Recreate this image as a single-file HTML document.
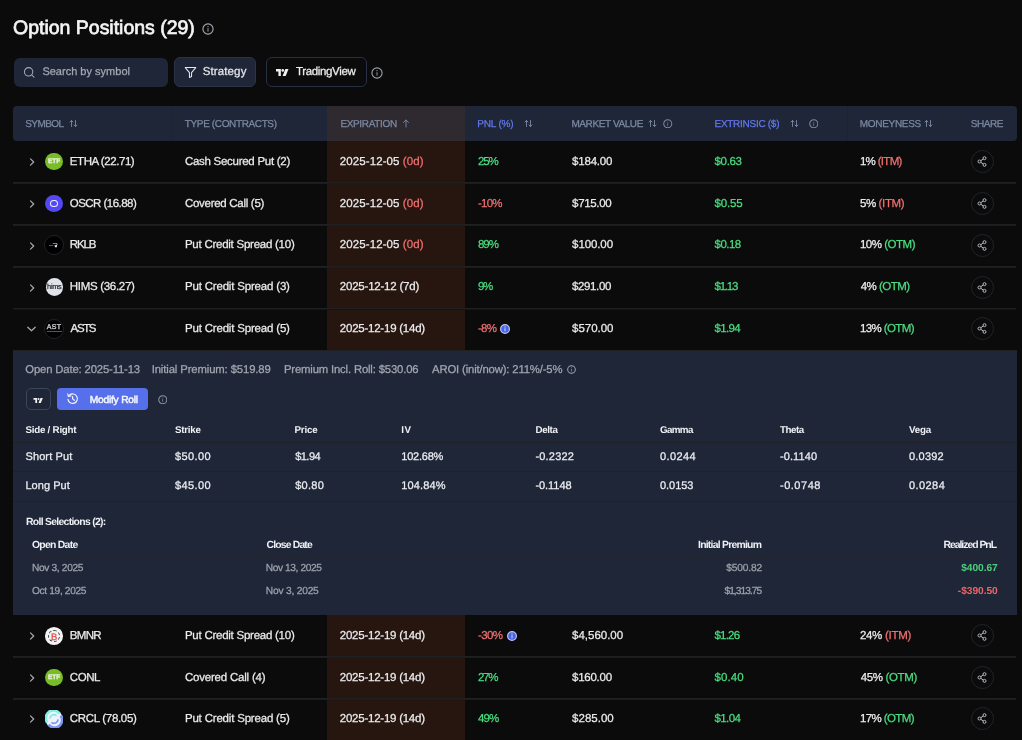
<!DOCTYPE html>
<html><head><meta charset="utf-8"><title>Option Positions</title><style>
*{box-sizing:border-box;margin:0;padding:0}
html,body{width:1022px;height:740px;overflow:hidden;background:#0b0b0c;font-family:"Liberation Sans",sans-serif;color:#ececee;text-rendering:geometricPrecision}
.a{position:absolute;white-space:nowrap}
.t{position:absolute;white-space:nowrap;line-height:1;-webkit-text-stroke:0.25px currentColor}
.b{-webkit-text-stroke:0}
#root{position:absolute;left:0;top:0;width:1022px;height:740px;will-change:transform}
.r{color:#f07070} .g{color:#4ade80}
</style></head>
<body><div id="root">
<div id="t0" class="t" style="top:19.29px;font-size:19.5px;left:13.10px;letter-spacing:-0.020px;color:#f4f4f5;-webkit-text-stroke:0.7px #f4f4f5;">Option Positions (29)</div>
<svg class="a" style="left:201.5px;top:23.0px" width="12" height="12" viewBox="0 0 24 24"><circle cx="12" cy="12" r="10.2" fill="none" stroke="#a9acb3" stroke-width="2.20"/><rect x="11.1" y="10.4" width="1.8" height="6.8" fill="#a9acb3"/><circle cx="12" cy="7.4" r="1.2" fill="#a9acb3"/></svg>
<div class="a" style="left:13.5px;top:57.5px;width:154.5px;height:29px;border-radius:6px;background:#1e2638"></div>
<svg class="a" style="left:22.5px;top:66px" width="12" height="12" viewBox="0 0 24 24" fill="none" stroke="#a3a8b3" stroke-width="2.1" stroke-linecap="round"><circle cx="11.2" cy="11.6" r="8.4"/><path d="M17.6 18l4.4 4.4"/></svg>
<div id="t1" class="t" style="top:67.19px;font-size:11px;left:42.38px;letter-spacing:0.011px;color:#a3a8b3;">Search by symbol</div>
<div class="a" style="left:174.3px;top:57.4px;width:82px;height:29.7px;border-radius:6px;background:#1e2638;border:1px solid #2b3447"></div>
<svg class="a" style="left:184px;top:65.6px" width="13" height="12.6" viewBox="0 0 24 24" fill="none" stroke="#e5e7eb" stroke-width="2" stroke-linejoin="round"><path d="M2 3h20l-8 9.5V20l-4 2v-9.5z"/></svg>
<div id="t2" class="t" style="top:67.06px;font-size:11.5px;left:202.76px;letter-spacing:0.114px;color:#e5e7eb;">Strategy</div>
<div class="a" style="left:266.2px;top:57.4px;width:100.8px;height:29.7px;border-radius:6px;border:1px solid #283044"></div>
<svg class="a" style="left:276px;top:68.8px" width="12.5" height="7" viewBox="0 0 36 20"><path d="M0 0h14v20H7V7H0z" fill="#f0f0f0"/><circle cx="19.5" cy="4" r="3.8" fill="#f0f0f0"/><path d="M27 0h9l-8 20h-9z" fill="#f0f0f0"/></svg>
<div id="t3" class="t" style="top:67.06px;font-size:11.5px;left:296.00px;letter-spacing:-0.352px;color:#eeeeee;">TradingView</div>
<svg class="a" style="left:370.7px;top:66.5px" width="12" height="12" viewBox="0 0 24 24"><circle cx="12" cy="12" r="10.2" fill="none" stroke="#9ca0a8" stroke-width="2.20"/><rect x="11.1" y="10.4" width="1.8" height="6.8" fill="#9ca0a8"/><circle cx="12" cy="7.4" r="1.2" fill="#9ca0a8"/></svg>
<div class="a" style="left:13px;top:106px;width:1004px;height:35px;border-radius:4px;background:#1e2638;overflow:hidden"><div class="a" style="left:314px;top:0;width:138px;height:35px;background:#2f2930"></div><div class="a" style="left:158px;top:0;width:1px;height:35px;background:#1c2334"></div><div class="a" style="left:834px;top:0;width:1px;height:35px;background:#1c2334"></div></div>
<div class="a" style="left:327px;top:141px;width:138px;height:599px;background:#26160f"></div>
<div id="t4" class="t" style="top:120.13px;font-size:10px;left:25.20px;letter-spacing:-0.544px;color:#7d8aa3;">SYMBOL</div>
<svg class="a" style="left:68.5px;top:119.1px" width="9" height="9" viewBox="0 0 18 18" fill="none" stroke="#7d8aa3" stroke-width="1.8" stroke-linecap="round" stroke-linejoin="round"><path d="M5 15V3M2 6l3-3 3 3M13 3v12M10 12l3 3 3-3"/></svg>
<div id="t5" class="t" style="top:120.13px;font-size:10px;left:184.82px;letter-spacing:-0.373px;color:#7d8aa3;">TYPE (CONTRACTS)</div>
<div id="t6" class="t" style="top:120.13px;font-size:10px;left:340.38px;letter-spacing:-0.338px;color:#7d8aa3;">EXPIRATION</div>
<svg class="a" style="left:401.5px;top:119.1px" width="8" height="9" viewBox="0 0 16 18" fill="none" stroke="#7d8aa3" stroke-width="1.8" stroke-linecap="round" stroke-linejoin="round"><path d="M8 16V2M3 7l5-5 5 5"/></svg>
<div id="t7" class="t" style="top:120.13px;font-size:10px;left:477.32px;letter-spacing:-0.187px;color:#6377ee;">PNL (%)</div>
<svg class="a" style="left:523.8px;top:119.1px" width="9" height="9" viewBox="0 0 18 18" fill="none" stroke="#7d8aa3" stroke-width="1.8" stroke-linecap="round" stroke-linejoin="round"><path d="M5 15V3M2 6l3-3 3 3M13 3v12M10 12l3 3 3-3"/></svg>
<div id="t8" class="t" style="top:120.13px;font-size:10px;left:571.38px;letter-spacing:-0.393px;color:#7d8aa3;">MARKET VALUE</div>
<svg class="a" style="left:647.8px;top:119.1px" width="9" height="9" viewBox="0 0 18 18" fill="none" stroke="#7d8aa3" stroke-width="1.8" stroke-linecap="round" stroke-linejoin="round"><path d="M5 15V3M2 6l3-3 3 3M13 3v12M10 12l3 3 3-3"/></svg>
<svg class="a" style="left:663.25px;top:118.85px" width="9.5" height="9.5" viewBox="0 0 24 24"><circle cx="12" cy="12" r="10.2" fill="none" stroke="#7d8aa3" stroke-width="2.53"/><rect x="11.1" y="10.4" width="1.8" height="6.8" fill="#7d8aa3"/><circle cx="12" cy="7.4" r="1.2" fill="#7d8aa3"/></svg>
<div id="t9" class="t" style="top:120.13px;font-size:10px;left:714.50px;letter-spacing:-0.280px;color:#6377ee;">EXTRINSIC ($)</div>
<svg class="a" style="left:790.2px;top:119.1px" width="9" height="9" viewBox="0 0 18 18" fill="none" stroke="#7d8aa3" stroke-width="1.8" stroke-linecap="round" stroke-linejoin="round"><path d="M5 15V3M2 6l3-3 3 3M13 3v12M10 12l3 3 3-3"/></svg>
<svg class="a" style="left:808.55px;top:118.85px" width="9.5" height="9.5" viewBox="0 0 24 24"><circle cx="12" cy="12" r="10.2" fill="none" stroke="#7d8aa3" stroke-width="2.53"/><rect x="11.1" y="10.4" width="1.8" height="6.8" fill="#7d8aa3"/><circle cx="12" cy="7.4" r="1.2" fill="#7d8aa3"/></svg>
<div id="t10" class="t" style="top:120.13px;font-size:10px;left:859.82px;letter-spacing:-0.320px;color:#7d8aa3;">MONEYNESS</div>
<svg class="a" style="left:924.2px;top:119.1px" width="9" height="9" viewBox="0 0 18 18" fill="none" stroke="#7d8aa3" stroke-width="1.8" stroke-linecap="round" stroke-linejoin="round"><path d="M5 15V3M2 6l3-3 3 3M13 3v12M10 12l3 3 3-3"/></svg>
<div id="t11" class="t" style="top:120.13px;font-size:10px;left:970.70px;letter-spacing:-0.400px;color:#7d8aa3;">SHARE</div>
<div class="a" style="left:13px;top:182px;width:1003px;height:1px;background:#1e2022"></div>
<div class="a" style="left:13px;top:183px;width:1003px;height:1px;background:#181c28"></div>
<div class="a" style="left:13px;top:224px;width:1003px;height:1px;background:#1e2022"></div>
<div class="a" style="left:13px;top:225px;width:1003px;height:1px;background:#181c28"></div>
<div class="a" style="left:13px;top:266px;width:1003px;height:1px;background:#1e2022"></div>
<div class="a" style="left:13px;top:267px;width:1003px;height:1px;background:#181c28"></div>
<div class="a" style="left:13px;top:656px;width:1003px;height:1px;background:#1e2022"></div>
<div class="a" style="left:13px;top:657px;width:1003px;height:1px;background:#181c28"></div>
<div class="a" style="left:13px;top:698px;width:1003px;height:1px;background:#1e2022"></div>
<div class="a" style="left:13px;top:699px;width:1003px;height:1px;background:#181c28"></div>
<div class="a" style="left:13px;top:308px;width:1003px;height:1px;background:#1e2022"></div>
<div class="a" style="left:13px;top:309px;width:1003px;height:1px;background:#121419"></div>
<svg class="a" style="left:28.5px;top:157.7px" width="6" height="8" viewBox="0 0 6 8" fill="none" stroke="#a8aab0" stroke-width="1.2" stroke-linecap="round" stroke-linejoin="round"><path d="M1.5 0.8L4.7 4 1.5 7.2"/></svg>
<div class="a" style="left:45.1px;top:152.79999999999998px;width:17.8px;height:17.6px;border-radius:50%;background:#79bd26"></div>
<div class="t" style="left:45px;top:158.6px;width:18px;text-align:center;font-size:6.6px;font-weight:700;color:#eef3e6;letter-spacing:-0.1px">ETF</div>
<div id="t12" class="t" style="top:156.66px;font-size:11.5px;left:69.82px;letter-spacing:-0.436px;">ETHA (22.71)</div>
<div id="t13" class="t" style="top:156.66px;font-size:11.5px;left:184.94px;letter-spacing:-0.278px;">Cash Secured Put (2)</div>
<div id="t14" class="t" style="top:156.66px;font-size:11.5px;left:339.82px;letter-spacing:0.091px;">2025-12-05 <span class="r">(0d)</span></div>
<div id="t15" class="t" style="top:156.66px;font-size:11.5px;left:478.00px;letter-spacing:-1.200px;color:#4ade80;">25%</div>
<div id="t16" class="t" style="top:156.66px;font-size:11.5px;left:572.12px;letter-spacing:-0.213px;">$184.00</div>
<div id="t17" class="t" style="top:156.66px;font-size:11.5px;left:714.50px;letter-spacing:-0.320px;color:#4ade80;">$0.63</div>
<div id="t18" class="t" style="top:156.66px;font-size:11.5px;left:859.88px;letter-spacing:-0.686px;">1% <span class="r">(ITM)</span></div>
<div class="a" style="left:971px;top:149.7px;width:23px;height:23px;border-radius:50%;border:1px solid #20242b"></div>
<svg class="a" style="left:977px;top:155.7px" width="10" height="11" viewBox="0 0 20 22" fill="none" stroke="#b9bcc2" stroke-width="2"><circle cx="15" cy="4.3" r="3"/><circle cx="5" cy="11" r="3"/><circle cx="15" cy="17.7" r="3"/><path d="M7.5 9.5l5-3.5M7.5 12.5l5 3.5"/></svg>
<svg class="a" style="left:28.5px;top:199.7px" width="6" height="8" viewBox="0 0 6 8" fill="none" stroke="#a8aab0" stroke-width="1.2" stroke-linecap="round" stroke-linejoin="round"><path d="M1.5 0.8L4.7 4 1.5 7.2"/></svg>
<div class="a" style="left:45px;top:194.7px;width:18px;height:17.6px;border-radius:50%;background:#5448f5"></div>
<div class="a" style="left:50.1px;top:199.7px;width:7.8px;height:7.4px;border-radius:50%;border:1.5px solid #f2f2fa"></div>
<div id="t19" class="t" style="top:199.26px;font-size:11.5px;left:69.82px;letter-spacing:-0.538px;">OSCR (16.88)</div>
<div id="t20" class="t" style="top:199.26px;font-size:11.5px;left:184.94px;letter-spacing:-0.288px;">Covered Call (5)</div>
<div id="t21" class="t" style="top:199.26px;font-size:11.5px;left:339.82px;letter-spacing:0.091px;">2025-12-05 <span class="r">(0d)</span></div>
<div id="t22" class="t" style="top:199.26px;font-size:11.5px;left:478.00px;letter-spacing:-0.800px;color:#f07070;">-10%</div>
<div id="t23" class="t" style="top:199.26px;font-size:11.5px;left:572.12px;letter-spacing:-0.347px;">$715.00</div>
<div id="t24" class="t" style="top:199.26px;font-size:11.5px;left:714.50px;letter-spacing:-0.160px;color:#4ade80;">$0.55</div>
<div id="t25" class="t" style="top:199.26px;font-size:11.5px;left:859.88px;letter-spacing:-0.366px;">5% <span class="r">(ITM)</span></div>
<div class="a" style="left:971px;top:191.7px;width:23px;height:23px;border-radius:50%;border:1px solid #20242b"></div>
<svg class="a" style="left:977px;top:197.7px" width="10" height="11" viewBox="0 0 20 22" fill="none" stroke="#b9bcc2" stroke-width="2"><circle cx="15" cy="4.3" r="3"/><circle cx="5" cy="11" r="3"/><circle cx="15" cy="17.7" r="3"/><path d="M7.5 9.5l5-3.5M7.5 12.5l5 3.5"/></svg>
<svg class="a" style="left:28.5px;top:241.7px" width="6" height="8" viewBox="0 0 6 8" fill="none" stroke="#a8aab0" stroke-width="1.2" stroke-linecap="round" stroke-linejoin="round"><path d="M1.5 0.8L4.7 4 1.5 7.2"/></svg>
<div class="a" style="left:44px;top:235.1px;width:20px;height:20px;border-radius:50%;background:#000;border:1px solid #1f2329"></div>
<svg class="a" style="left:46px;top:239.1px" width="16" height="12" viewBox="0 0 16 12"><rect x="2.9" y="6" width="4.4" height="1" fill="#8a3a30"/><rect x="6.8" y="4" width="3.8" height="0.9" fill="#8d8d90"/><path d="M10.3 4.1Q11.2 4.4 11 6.2" stroke="#b0b0b4" stroke-width="0.9" fill="none"/><path d="M8.4 6.2L11 6L10.8 8.3L9.1 8.3z" fill="#e4e4ea"/></svg>
<div id="t26" class="t" style="top:240.26px;font-size:11.5px;left:69.82px;letter-spacing:-1.120px;">RKLB</div>
<div id="t27" class="t" style="top:240.26px;font-size:11.5px;left:184.94px;letter-spacing:-0.251px;">Put Credit Spread (10)</div>
<div id="t28" class="t" style="top:240.26px;font-size:11.5px;left:339.82px;letter-spacing:0.091px;">2025-12-05 <span class="r">(0d)</span></div>
<div id="t29" class="t" style="top:240.26px;font-size:11.5px;left:478.00px;letter-spacing:-1.040px;color:#4ade80;">89%</div>
<div id="t30" class="t" style="top:240.26px;font-size:11.5px;left:572.12px;letter-spacing:-0.107px;">$100.00</div>
<div id="t31" class="t" style="top:240.26px;font-size:11.5px;left:714.50px;letter-spacing:-0.520px;color:#4ade80;">$0.18</div>
<div id="t32" class="t" style="top:240.26px;font-size:11.5px;left:859.88px;letter-spacing:-0.480px;">10% <span class="g">(OTM)</span></div>
<div class="a" style="left:971px;top:233.7px;width:23px;height:23px;border-radius:50%;border:1px solid #20242b"></div>
<svg class="a" style="left:977px;top:239.7px" width="10" height="11" viewBox="0 0 20 22" fill="none" stroke="#b9bcc2" stroke-width="2"><circle cx="15" cy="4.3" r="3"/><circle cx="5" cy="11" r="3"/><circle cx="15" cy="17.7" r="3"/><path d="M7.5 9.5l5-3.5M7.5 12.5l5 3.5"/></svg>
<svg class="a" style="left:28.5px;top:283.5px" width="6" height="8" viewBox="0 0 6 8" fill="none" stroke="#a8aab0" stroke-width="1.2" stroke-linecap="round" stroke-linejoin="round"><path d="M1.5 0.8L4.7 4 1.5 7.2"/></svg>
<div class="a" style="left:45.5px;top:278.4px;width:17.6px;height:17.6px;border-radius:50%;background:#dfe3ea"></div>
<div class="t" style="left:45.3px;top:282.59999999999997px;width:18px;text-align:center;font-size:7.4px;font-weight:400;color:#222226;letter-spacing:-0.3px;-webkit-text-stroke:0.2px #222226">hims</div>
<div id="t33" class="t" style="top:282.06px;font-size:11.5px;left:69.82px;letter-spacing:-0.305px;">HIMS (36.27)</div>
<div id="t34" class="t" style="top:282.06px;font-size:11.5px;left:184.94px;letter-spacing:-0.184px;">Put Credit Spread (3)</div>
<div id="t35" class="t" style="top:282.06px;font-size:11.5px;left:339.82px;letter-spacing:-0.217px;">2025-12-12 (7d)</div>
<div id="t36" class="t" style="top:282.06px;font-size:11.5px;left:478.00px;letter-spacing:-1.280px;color:#4ade80;">9%</div>
<div id="t37" class="t" style="top:282.06px;font-size:11.5px;left:572.12px;letter-spacing:-0.400px;">$291.00</div>
<div id="t38" class="t" style="top:282.06px;font-size:11.5px;left:714.50px;letter-spacing:-1.240px;color:#4ade80;">$1.13</div>
<div id="t39" class="t" style="top:282.06px;font-size:11.5px;left:860.68px;letter-spacing:-0.503px;">4% <span class="g">(OTM)</span></div>
<div class="a" style="left:971px;top:275.5px;width:23px;height:23px;border-radius:50%;border:1px solid #20242b"></div>
<svg class="a" style="left:977px;top:281.5px" width="10" height="11" viewBox="0 0 20 22" fill="none" stroke="#b9bcc2" stroke-width="2"><circle cx="15" cy="4.3" r="3"/><circle cx="5" cy="11" r="3"/><circle cx="15" cy="17.7" r="3"/><path d="M7.5 9.5l5-3.5M7.5 12.5l5 3.5"/></svg>
<svg class="a" style="left:27.2px;top:326.3px" width="9" height="6" viewBox="0 0 9 6" fill="none" stroke="#a8aab0" stroke-width="1.2" stroke-linecap="round" stroke-linejoin="round"><path d="M0.8 1.2L4.5 4.8 8.2 1.2"/></svg>
<div class="a" style="left:44px;top:319.1px;width:20px;height:20px;border-radius:50%;background:#000;border:1px solid #1f2329"></div>
<div class="t" style="left:44px;top:324.20000000000005px;width:20px;text-align:center;font-size:7px;font-weight:400;color:#cfcfd2;letter-spacing:0.3px;-webkit-text-stroke:0.35px #cfcfd2">AST</div>
<div class="a" style="left:46.8px;top:331.1px;width:15.4px;height:1px;background:#9c3b33"></div>
<div id="t40" class="t" style="top:323.96px;font-size:11.5px;left:70.62px;letter-spacing:-1.387px;">ASTS</div>
<div id="t41" class="t" style="top:323.96px;font-size:11.5px;left:184.94px;letter-spacing:-0.184px;">Put Credit Spread (5)</div>
<div id="t42" class="t" style="top:323.96px;font-size:11.5px;left:339.82px;letter-spacing:-0.235px;">2025-12-19 (14d)</div>
<div id="t43" class="t" style="top:323.96px;font-size:11.5px;left:478.00px;letter-spacing:-0.800px;color:#f07070;">-8%</div>
<svg class="a" style="left:500.4px;top:324.3px" width="10" height="10" viewBox="0 0 20 20"><circle cx="10" cy="10" r="8.8" fill="#4a62e4" stroke="#b6c3f8" stroke-width="2.4"/><rect x="8.9" y="8.5" width="2.2" height="6" fill="#c9d4fb"/><circle cx="10" cy="5.9" r="1.3" fill="#c9d4fb"/></svg>
<div id="t44" class="t" style="top:323.96px;font-size:11.5px;left:572.12px;letter-spacing:-0.027px;">$570.00</div>
<div id="t45" class="t" style="top:323.96px;font-size:11.5px;left:714.50px;letter-spacing:-0.680px;color:#4ade80;">$1.94</div>
<div id="t46" class="t" style="top:323.96px;font-size:11.5px;left:859.88px;letter-spacing:-0.600px;">13% <span class="g">(OTM)</span></div>
<div class="a" style="left:971px;top:317.0px;width:23px;height:23px;border-radius:50%;border:1px solid #20242b"></div>
<svg class="a" style="left:977px;top:323.0px" width="10" height="11" viewBox="0 0 20 22" fill="none" stroke="#b9bcc2" stroke-width="2"><circle cx="15" cy="4.3" r="3"/><circle cx="5" cy="11" r="3"/><circle cx="15" cy="17.7" r="3"/><path d="M7.5 9.5l5-3.5M7.5 12.5l5 3.5"/></svg>
<svg class="a" style="left:28.5px;top:631.7px" width="6" height="8" viewBox="0 0 6 8" fill="none" stroke="#a8aab0" stroke-width="1.2" stroke-linecap="round" stroke-linejoin="round"><path d="M1.5 0.8L4.7 4 1.5 7.2"/></svg>
<div class="a" style="left:45px;top:626.8000000000001px;width:18.3px;height:17.8px;border-radius:50%;background:#f2f2f2"></div>
<div class="a" style="left:47.9px;top:629.5px;width:12.6px;height:12.4px;border-radius:50%;border:1.1px dashed #3a3a3a"></div>
<div class="t" style="left:45px;top:631.6px;width:18.3px;text-align:center;font-size:9.4px;font-weight:400;color:#e5484d">B</div>
<div id="t47" class="t" style="top:630.66px;font-size:11.5px;left:69.82px;letter-spacing:-0.693px;">BMNR</div>
<div id="t48" class="t" style="top:630.66px;font-size:11.5px;left:184.94px;letter-spacing:-0.251px;">Put Credit Spread (10)</div>
<div id="t49" class="t" style="top:630.66px;font-size:11.5px;left:339.82px;letter-spacing:-0.245px;">2025-12-19 (14d)</div>
<div id="t50" class="t" style="top:630.66px;font-size:11.5px;left:478.00px;letter-spacing:-0.587px;color:#f07070;">-30%</div>
<svg class="a" style="left:506.6px;top:631px" width="10" height="10" viewBox="0 0 20 20"><circle cx="10" cy="10" r="8.8" fill="#4a62e4" stroke="#b6c3f8" stroke-width="2.4"/><rect x="8.9" y="8.5" width="2.2" height="6" fill="#c9d4fb"/><circle cx="10" cy="5.9" r="1.3" fill="#c9d4fb"/></svg>
<div id="t51" class="t" style="top:630.66px;font-size:11.5px;left:572.12px;letter-spacing:-0.020px;">$4,560.00</div>
<div id="t52" class="t" style="top:630.66px;font-size:11.5px;left:714.50px;letter-spacing:-0.800px;color:#4ade80;">$1.26</div>
<div id="t53" class="t" style="top:630.66px;font-size:11.5px;left:859.88px;letter-spacing:-0.280px;">24% <span class="r">(ITM)</span></div>
<div class="a" style="left:971px;top:623.7px;width:23px;height:23px;border-radius:50%;border:1px solid #20242b"></div>
<svg class="a" style="left:977px;top:629.7px" width="10" height="11" viewBox="0 0 20 22" fill="none" stroke="#b9bcc2" stroke-width="2"><circle cx="15" cy="4.3" r="3"/><circle cx="5" cy="11" r="3"/><circle cx="15" cy="17.7" r="3"/><path d="M7.5 9.5l5-3.5M7.5 12.5l5 3.5"/></svg>
<svg class="a" style="left:28.5px;top:673.7px" width="6" height="8" viewBox="0 0 6 8" fill="none" stroke="#a8aab0" stroke-width="1.2" stroke-linecap="round" stroke-linejoin="round"><path d="M1.5 0.8L4.7 4 1.5 7.2"/></svg>
<div class="a" style="left:45.1px;top:668.8000000000001px;width:17.8px;height:17.6px;border-radius:50%;background:#79bd26"></div>
<div class="t" style="left:45px;top:674.6px;width:18px;text-align:center;font-size:6.6px;font-weight:700;color:#eef3e6;letter-spacing:-0.1px">ETF</div>
<div id="t54" class="t" style="top:672.76px;font-size:11.5px;left:69.82px;letter-spacing:-0.427px;">CONL</div>
<div id="t55" class="t" style="top:672.76px;font-size:11.5px;left:184.94px;letter-spacing:-0.203px;">Covered Call (4)</div>
<div id="t56" class="t" style="top:672.76px;font-size:11.5px;left:339.82px;letter-spacing:-0.245px;">2025-12-19 (14d)</div>
<div id="t57" class="t" style="top:672.76px;font-size:11.5px;left:478.00px;letter-spacing:-1.280px;color:#4ade80;">27%</div>
<div id="t58" class="t" style="top:672.76px;font-size:11.5px;left:572.12px;letter-spacing:-0.267px;">$160.00</div>
<div id="t59" class="t" style="top:672.76px;font-size:11.5px;left:714.50px;letter-spacing:0.080px;color:#4ade80;">$0.40</div>
<div id="t60" class="t" style="top:672.76px;font-size:11.5px;left:860.68px;letter-spacing:-0.360px;">45% <span class="g">(OTM)</span></div>
<div class="a" style="left:971px;top:665.7px;width:23px;height:23px;border-radius:50%;border:1px solid #20242b"></div>
<svg class="a" style="left:977px;top:671.7px" width="10" height="11" viewBox="0 0 20 22" fill="none" stroke="#b9bcc2" stroke-width="2"><circle cx="15" cy="4.3" r="3"/><circle cx="5" cy="11" r="3"/><circle cx="15" cy="17.7" r="3"/><path d="M7.5 9.5l5-3.5M7.5 12.5l5 3.5"/></svg>
<svg class="a" style="left:28.5px;top:715.2px" width="6" height="8" viewBox="0 0 6 8" fill="none" stroke="#a8aab0" stroke-width="1.2" stroke-linecap="round" stroke-linejoin="round"><path d="M1.5 0.8L4.7 4 1.5 7.2"/></svg>
<svg class="a" style="left:45px;top:710.2px" width="18" height="18" viewBox="0 0 18 18"><circle cx="9" cy="9" r="8.9" fill="#eef2fb"/><path d="M2.2 12.4A7.4 7.4 0 0 1 14.6 3.6" stroke="#7ff0e3" stroke-width="2.6" fill="none"/><path d="M15.6 5.6A7.4 7.4 0 0 1 3.6 14.6" stroke="#7b96f6" stroke-width="2.6" fill="none"/><path d="M4.9 8.6A4.1 4.1 0 0 1 11.6 5.6" stroke="#86e6e0" stroke-width="1.7" fill="none"/><path d="M13.1 9.4A4.1 4.1 0 0 1 6.4 12.4" stroke="#7f98f2" stroke-width="1.7" fill="none"/></svg>
<div id="t61" class="t" style="top:713.96px;font-size:11.5px;left:69.82px;letter-spacing:-0.320px;">CRCL (78.05)</div>
<div id="t62" class="t" style="top:713.96px;font-size:11.5px;left:184.94px;letter-spacing:-0.192px;">Put Credit Spread (5)</div>
<div id="t63" class="t" style="top:713.96px;font-size:11.5px;left:339.82px;letter-spacing:-0.245px;">2025-12-19 (14d)</div>
<div id="t64" class="t" style="top:713.96px;font-size:11.5px;left:478.00px;letter-spacing:-0.880px;color:#4ade80;">49%</div>
<div id="t65" class="t" style="top:713.96px;font-size:11.5px;left:572.12px;letter-spacing:-0.000px;">$285.00</div>
<div id="t66" class="t" style="top:713.96px;font-size:11.5px;left:714.50px;letter-spacing:-0.600px;color:#4ade80;">$1.04</div>
<div id="t67" class="t" style="top:713.96px;font-size:11.5px;left:859.88px;letter-spacing:-0.600px;">17% <span class="g">(OTM)</span></div>
<div class="a" style="left:971px;top:707.2px;width:23px;height:23px;border-radius:50%;border:1px solid #20242b"></div>
<svg class="a" style="left:977px;top:713.2px" width="10" height="11" viewBox="0 0 20 22" fill="none" stroke="#b9bcc2" stroke-width="2"><circle cx="15" cy="4.3" r="3"/><circle cx="5" cy="11" r="3"/><circle cx="15" cy="17.7" r="3"/><path d="M7.5 9.5l5-3.5M7.5 12.5l5 3.5"/></svg>
<div class="a" style="left:13px;top:350px;width:1003.5px;height:1px;background:#1f2022"></div>
<div class="a" style="left:13px;top:351px;width:1003.5px;height:264px;background:#1e2638"></div>
<div id="t68" class="t" style="top:365.23px;font-size:11.3px;left:25.32px;letter-spacing:-0.152px;color:#a3a7b0;">Open Date: 2025-11-13</div>
<div id="t69" class="t" style="top:365.23px;font-size:11.3px;left:151.70px;letter-spacing:-0.118px;color:#a3a7b0;">Initial Premium: $519.89</div>
<div id="t70" class="t" style="top:365.23px;font-size:11.3px;left:283.94px;letter-spacing:-0.160px;color:#a3a7b0;">Premium Incl. Roll: $530.06</div>
<div id="t71" class="t" style="top:365.23px;font-size:11.3px;left:432.06px;letter-spacing:-0.153px;color:#a3a7b0;">AROI (init/now): 211%/-5%</div>
<svg class="a" style="left:567.2px;top:365.0px" width="9" height="9" viewBox="0 0 24 24"><circle cx="12" cy="12" r="10.2" fill="none" stroke="#a3a7b0" stroke-width="2.67"/><rect x="11.1" y="10.4" width="1.8" height="6.8" fill="#a3a7b0"/><circle cx="12" cy="7.4" r="1.2" fill="#a3a7b0"/></svg>
<div class="a" style="left:25.5px;top:388.1px;width:25.3px;height:22.4px;border-radius:5px;border:1px solid #3c4659"></div>
<svg class="a" style="left:33.4px;top:397.6px" width="10.3" height="5.2" viewBox="0 0 36 20"><path d="M0 0h14v20H7V7H0z" fill="#f0f0f0"/><circle cx="19.5" cy="4" r="3.8" fill="#f0f0f0"/><path d="M27 0h9l-8 20h-9z" fill="#f0f0f0"/></svg>
<div class="a" style="left:57.1px;top:388.1px;width:91.3px;height:22.4px;border-radius:4px;background:#5670ec"></div>
<svg class="a" style="left:66px;top:392.4px" width="13.2" height="13.2" viewBox="0 0 24 24" fill="none" stroke="#f4f5ff" stroke-width="2.1" stroke-linecap="round" stroke-linejoin="round"><path d="M3.6 13.5a8.6 8.6 0 1 0 2.6-7.6"/><path d="M3.2 3.2l1 4.8 4.8-1"/><path d="M12 8.2v4.3l3.2 2.6"/></svg>
<div id="t72" class="t" style="top:395.76px;font-size:10.2px;left:89.76px;letter-spacing:-0.208px;color:#f4f5ff;-webkit-text-stroke:0.5px #f4f5ff;">Modify Roll</div>
<svg class="a" style="left:157.75px;top:394.85px" width="9.5" height="9.5" viewBox="0 0 24 24"><circle cx="12" cy="12" r="10.2" fill="none" stroke="#8d93a0" stroke-width="2.53"/><rect x="11.1" y="10.4" width="1.8" height="6.8" fill="#8d93a0"/><circle cx="12" cy="7.4" r="1.2" fill="#8d93a0"/></svg>
<div id="t73" class="t b" style="top:425.50px;font-size:9.8px;left:25.44px;letter-spacing:-0.247px;color:#eef0f4;font-weight:700;">Side / Right</div>
<div id="t74" class="t b" style="top:425.50px;font-size:9.8px;left:175.00px;letter-spacing:-0.256px;color:#eef0f4;font-weight:700;">Strike</div>
<div id="t75" class="t b" style="top:425.50px;font-size:9.8px;left:294.38px;letter-spacing:-0.160px;color:#eef0f4;font-weight:700;">Price</div>
<div id="t76" class="t b" style="top:425.50px;font-size:9.8px;left:401.26px;letter-spacing:0.640px;color:#eef0f4;font-weight:700;">IV</div>
<div id="t77" class="t b" style="top:425.50px;font-size:9.8px;left:535.44px;letter-spacing:-0.360px;color:#eef0f4;font-weight:700;">Delta</div>
<div id="t78" class="t b" style="top:425.50px;font-size:9.8px;left:660.00px;letter-spacing:-0.640px;color:#eef0f4;font-weight:700;">Gamma</div>
<div id="t79" class="t b" style="top:425.50px;font-size:9.8px;left:779.94px;letter-spacing:-0.440px;color:#eef0f4;font-weight:700;">Theta</div>
<div id="t80" class="t b" style="top:425.50px;font-size:9.8px;left:909.06px;letter-spacing:-0.213px;color:#eef0f4;font-weight:700;">Vega</div>
<div class="a" style="left:13px;top:442px;width:1003.5px;height:1px;background:#202127"></div>
<div class="a" style="left:13px;top:471px;width:1003.5px;height:1px;background:#202127"></div>
<div class="a" style="left:13px;top:501px;width:1003.5px;height:1px;background:#202127"></div>
<div id="t81" class="t" style="top:451.99px;font-size:11px;left:25.44px;letter-spacing:0.120px;color:#eceef2;">Short Put</div>
<div id="t82" class="t" style="top:451.99px;font-size:11px;left:175.00px;letter-spacing:0.416px;color:#eceef2;">$50.00</div>
<div id="t83" class="t" style="top:451.99px;font-size:11px;left:295.18px;letter-spacing:-0.520px;color:#eceef2;">$1.94</div>
<div id="t84" class="t" style="top:451.99px;font-size:11px;left:401.26px;letter-spacing:-0.213px;color:#eceef2;">102.68%</div>
<div id="t85" class="t" style="top:451.99px;font-size:11px;left:535.44px;letter-spacing:0.187px;color:#eceef2;">-0.2322</div>
<div id="t86" class="t" style="top:451.99px;font-size:11px;left:660.00px;letter-spacing:0.384px;color:#eceef2;">0.0244</div>
<div id="t87" class="t" style="top:451.99px;font-size:11px;left:779.94px;letter-spacing:0.107px;color:#eceef2;">-0.1140</div>
<div id="t88" class="t" style="top:451.99px;font-size:11px;left:909.06px;letter-spacing:0.192px;color:#eceef2;">0.0392</div>
<div id="t89" class="t" style="top:480.99px;font-size:11px;left:25.44px;letter-spacing:0.046px;color:#eceef2;">Long Put</div>
<div id="t90" class="t" style="top:480.99px;font-size:11px;left:175.00px;letter-spacing:0.416px;color:#eceef2;">$45.00</div>
<div id="t91" class="t" style="top:480.99px;font-size:11px;left:295.18px;letter-spacing:0.280px;color:#eceef2;">$0.80</div>
<div id="t92" class="t" style="top:480.99px;font-size:11px;left:401.26px;letter-spacing:0.133px;color:#eceef2;">104.84%</div>
<div id="t93" class="t" style="top:480.99px;font-size:11px;left:535.44px;letter-spacing:-0.053px;color:#eceef2;">-0.1148</div>
<div id="t94" class="t" style="top:480.99px;font-size:11px;left:660.00px;letter-spacing:-0.032px;color:#eceef2;">0.0153</div>
<div id="t95" class="t" style="top:480.99px;font-size:11px;left:779.94px;letter-spacing:0.533px;color:#eceef2;">-0.0748</div>
<div id="t96" class="t" style="top:480.99px;font-size:11px;left:909.06px;letter-spacing:0.416px;color:#eceef2;">0.0284</div>
<div id="t97" class="t b" style="top:517.69px;font-size:10.4px;left:26.00px;letter-spacing:-0.699px;color:#eef0f4;font-weight:700;">Roll Selections (2):</div>
<div id="t98" class="t b" style="top:540.69px;font-size:10.4px;left:31.88px;letter-spacing:-0.700px;color:#eef0f4;font-weight:700;">Open Date</div>
<div id="t99" class="t b" style="top:540.69px;font-size:10.4px;left:266.56px;letter-spacing:-0.836px;color:#eef0f4;font-weight:700;">Close Date</div>
<div id="t100" class="t b" style="top:540.69px;font-size:10.4px;right:260.80px;letter-spacing:-0.754px;color:#eef0f4;font-weight:700;">Initial Premium</div>
<div id="t101" class="t b" style="top:540.69px;font-size:10.4px;right:25.98px;letter-spacing:-1.004px;color:#eef0f4;font-weight:700;">Realized PnL</div>
<div class="a" style="left:26px;top:556px;width:977px;height:1px;background:#23252e"></div>
<div class="a" style="left:26px;top:579px;width:977px;height:1px;background:#23252e"></div>
<div class="a" style="left:26px;top:601px;width:977px;height:1px;background:#23252e"></div>
<div id="t102" class="t" style="top:564.26px;font-size:10.2px;left:31.88px;letter-spacing:-0.336px;color:#9ea3ab;">Nov 3, 2025</div>
<div id="t103" class="t" style="top:564.26px;font-size:10.2px;left:265.76px;letter-spacing:-0.407px;color:#9ea3ab;">Nov 13, 2025</div>
<div id="t104" class="t" style="top:564.26px;font-size:10.2px;right:260.00px;letter-spacing:-0.160px;color:#9ea3ab;">$500.82</div>
<div id="t105" class="t b" style="top:564.26px;font-size:10.2px;right:24.38px;letter-spacing:-0.067px;color:#4ad07c;font-weight:700;">$400.67</div>
<div id="t106" class="t" style="top:586.86px;font-size:10.2px;left:31.88px;letter-spacing:-0.335px;color:#9ea3ab;">Oct 19, 2025</div>
<div id="t107" class="t" style="top:586.86px;font-size:10.2px;left:265.76px;letter-spacing:-0.192px;color:#9ea3ab;">Nov 3, 2025</div>
<div id="t108" class="t" style="top:586.86px;font-size:10.2px;right:260.80px;letter-spacing:-0.950px;color:#9ea3ab;">$1,313.75</div>
<div id="t109" class="t b" style="top:586.86px;font-size:10.2px;right:24.38px;letter-spacing:-0.057px;color:#ec6767;font-weight:700;">-$390.50</div>
</div></body></html>
